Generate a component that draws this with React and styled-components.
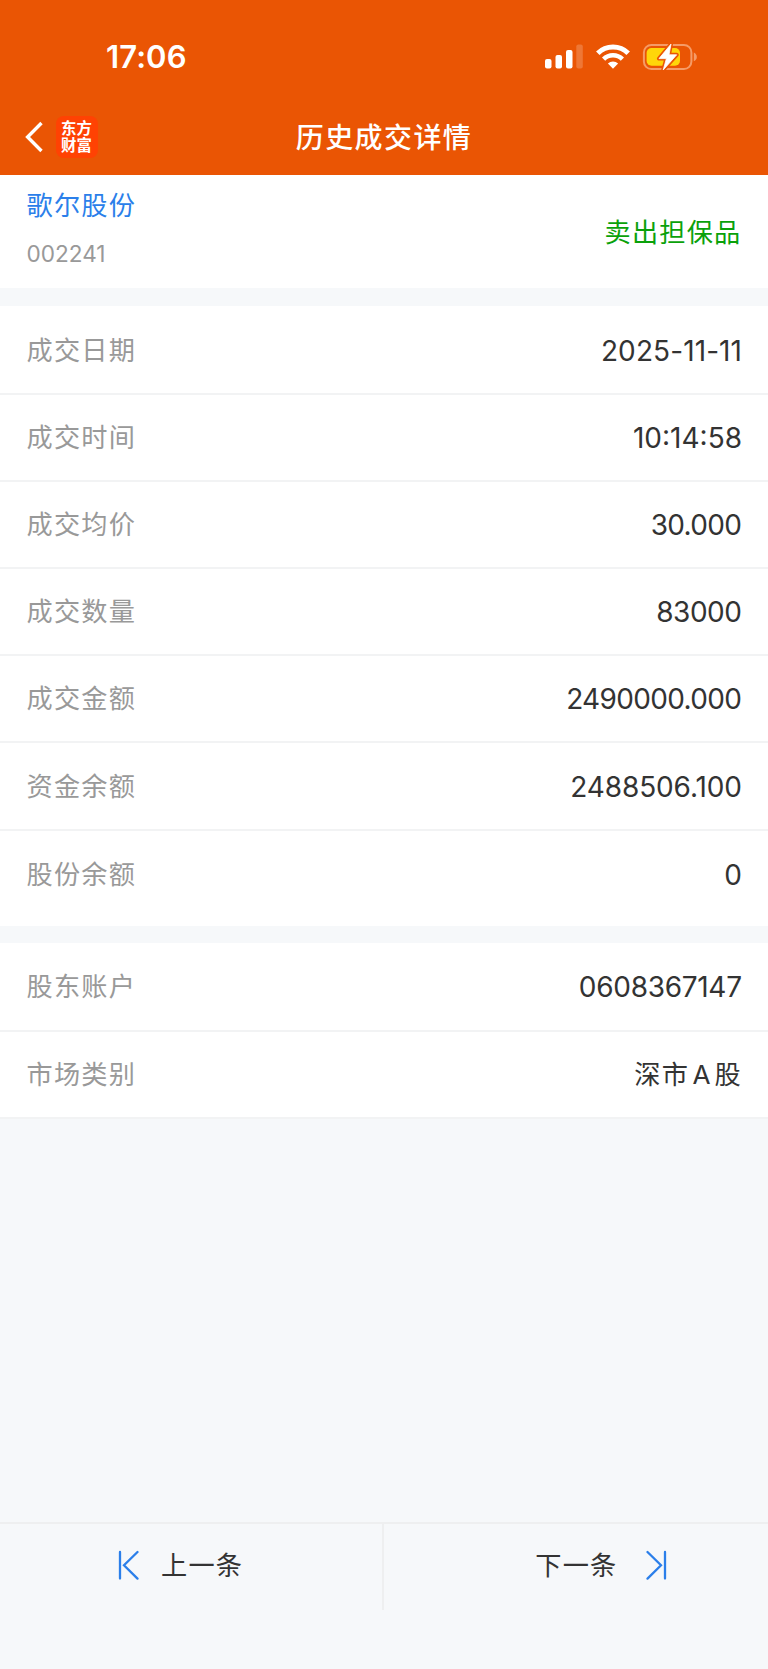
import React from 'react'
import styled, { createGlobalStyle } from 'styled-components'

const GlobalStyle = createGlobalStyle`
  * {
    box-sizing: border-box;
  }
  body {
    margin: 0;
    background: #f6f8fa;
    font-family: Inter, "Noto Sans CJK SC", sans-serif;
    color: #333;
  }
`;

const Page = styled.div`
  display: flex;
  flex-direction: column;
  width: 768px;
  height: 1669px;
  overflow: hidden;
  background: #f6f8fa;
`;

const Header = styled.header`
  height: 175px;
  background: #ea5504;
  color: #fff;
`;

const StatusBar = styled.div`
  display: flex;
  align-items: center;
  justify-content: space-between;
  height: 99px;
  padding: 15px 70px 0 106px;
`;

const Clock = styled.span`
  font-size: 31px;
  font-weight: 600;
  line-height: 40px;
  letter-spacing: 0.1px;
`;

const StatusIcons = styled.div`
  display: flex;
  align-items: center;
  gap: 12.5px;

  & svg {
    display: block;
  }
`;

const NavBar = styled.div`
  display: grid;
  grid-template-columns: 1fr auto 1fr;
  align-items: center;
  height: 76px;
`;

const NavLeft = styled.div`
  display: flex;
  align-items: center;
  gap: 13px;
  padding-left: 25px;
`;

const AppLogo = styled.div`
  display: flex;
  flex-direction: column;
  align-items: center;
  justify-content: center;
  width: 42px;
  height: 42px;
  padding-right: 1px;
  border-radius: 8px;
  background: #ff4203;
  font-size: 15.4px;
  font-weight: 700;
  line-height: 17px;
`;

const Title = styled.h1`
  margin: 0;
  padding-top: 2px;
  font-size: 28px;
  font-weight: 500;
  line-height: 40px;
  letter-spacing: 1.4px;
`;

const Stock = styled.section`
  display: flex;
  align-items: center;
  justify-content: space-between;
  height: 113px;
  padding: 3px 26.5px 0;
  background: #fff;
`;

const StockInfo = styled.div`
  display: flex;
  flex-direction: column;
  gap: 11px;
  padding-bottom: 7px;
`;

const StockName = styled.span`
  color: #2b7fea;
  font-size: 26.2px;
  line-height: 38px;
  letter-spacing: 1.2px;
`;

const StockCode = styled.span`
  color: #999;
  font-size: 22.6px;
  line-height: 36px;
`;

const Side = styled.span`
  color: #0aa10a;
  font-size: 26.2px;
  line-height: 38px;
  letter-spacing: 1.2px;
`;

const Group = styled.section`
  margin-top: ${(p) => p.$gap}px;
  padding-top: 1.5px;
  padding-bottom: ${(p) => p.$bottom || 0}px;
  background: #fff;
`;

const Row = styled.div`
  display: flex;
  align-items: center;
  justify-content: space-between;
  height: 87.2px;
  padding: 1px 26px 0 26.5px;
  border-bottom: ${(p) => (p.$last ? 0 : 2)}px solid #f2f3f4;
`;

const Label = styled.span`
  color: #999;
  font-size: 26.2px;
  line-height: 38px;
  letter-spacing: 1.2px;
`;

const Value = styled.span`
  font-size: 28px;
  line-height: 38px;
  letter-spacing: ${(p) => p.$tracking || 0}px;
  margin-right: ${(p) => -(p.$tracking || 0)}px;
`;

const Market = styled(Value)`
  margin-right: 0;
  font-size: 26.2px;
`;

const Latin = styled.span`
  margin: 0 2.8px 0 3.5px;
`;

const Footer = styled.footer`
  display: flex;
  height: 147px;
  margin-top: auto;
  border-top: 2px solid #eeeff0;
`;

const PagerButton = styled.button`
  display: flex;
  align-items: center;
  justify-content: ${(p) => (p.$next ? 'flex-end' : 'flex-start')};
  gap: ${(p) => (p.$next ? 28 : 22)}px;
  width: 384px;
  height: 86px;
  padding: ${(p) => (p.$next ? '0 101.5px 4px 0' : '0 0 4px 118px')};
  border: 0;
  border-right: ${(p) => (p.$next ? 0 : 2)}px solid #eeeff0;
  background: none;
  color: #333;
  font: inherit;
  font-size: 26.2px;
  line-height: 38px;
  letter-spacing: 1.2px;

  & span {
    margin-top: 2px;
  }
`;

const Signal = () => (
  <svg width="38" height="26" viewBox="0 0 38 26" fill="#fff">
    <rect x="0" y="15" width="6.5" height="9.5" rx="2" />
    <rect x="10.5" y="11" width="6.5" height="13.5" rx="2" />
    <rect x="21" y="6" width="6.5" height="18.5" rx="2" />
    <rect x="31.3" y="0.5" width="6.5" height="24" rx="2" opacity="0.2" />
  </svg>
)

const Wifi = () => (
  <svg width="34" height="26" viewBox="0 0 34 26" fill="none" stroke="#fff">
    <path d="M1.8 9.2A21.7 21.7 0 0 1 32.2 9.2" strokeWidth="5" />
    <path d="M7.6 15.1A13.4 13.4 0 0 1 26.4 15.1" strokeWidth="4.6" />
    <path d="M17 24.7L11.9 19.5A7.3 7.3 0 0 1 22.1 19.5Z" fill="#fff" stroke="none" />
  </svg>
)

const Battery = () => (
  <svg width="56" height="28" viewBox="0 0 56 28">
    <rect x="1.9" y="1.9" width="47.5" height="24.2" rx="7.5" fill="none" stroke="#f59b67" strokeWidth="2" />
    <path d="M51.8 9.5Q54.8 11 54.8 14T51.8 18.3Z" fill="#f59b67" />
    <rect x="4.6" y="5" width="33.4" height="17.8" rx="5" fill="#ffd60a" />
    <path
      d="M29 1.1L17 15.6H24.4L21.2 27L34.7 11.8H27Z"
      fill="none"
      stroke="#ea5504"
      strokeWidth="4"
      strokeLinejoin="round"
    />
    <path
      d="M29 1.1L17 15.6H24.4L21.2 27L34.7 11.8H27Z"
      fill="#fff"
      stroke="#fff"
      strokeWidth="0.8"
      strokeLinejoin="round"
    />
  </svg>
)

const Back = () => (
  <svg width="18" height="32" viewBox="0 0 18 32" fill="none" stroke="#fff" strokeWidth="3.4">
    <path d="M16.5 2L2.6 16L16.5 30" />
  </svg>
)

const PagerIcon = ({ next }) => (
  <svg width="21" height="30" viewBox="0 0 21 30" fill="none" stroke="#2b7fea" strokeWidth="2.3" strokeLinecap="round">
    {next ? (
      <path d="M1.5 2L15 15.3L1.5 28.6M19 2V28.6" />
    ) : (
      <path d="M19.5 2L6 15.3L19.5 28.6M2 2V28.6" />
    )}
  </svg>
)

const trade = [
  { label: '成交日期', value: '2025-11-11', tracking: 0.1 },
  { label: '成交时间', value: '10:14:58', tracking: 0 },
  { label: '成交均价', value: '30.000', tracking: -0.65 },
  { label: '成交数量', value: '83000', tracking: -0.45 },
  { label: '成交金额', value: '2490000.000', tracking: -0.65 },
  { label: '资金余额', value: '2488506.100', tracking: -0.1 },
  { label: '股份余额', value: '0', tracking: 0 },
]

const App = () => {
  return (
    <Page>
      <GlobalStyle />
      <Header>
        <StatusBar>
          <Clock>17:06</Clock>
          <StatusIcons>
            <Signal />
            <Wifi />
            <Battery />
          </StatusIcons>
        </StatusBar>
        <NavBar>
          <NavLeft>
            <Back />
            <AppLogo>
              <span>东方</span>
              <span>财富</span>
            </AppLogo>
          </NavLeft>
          <Title>历史成交详情</Title>
        </NavBar>
      </Header>
      <Stock>
        <StockInfo>
          <StockName>歌尔股份</StockName>
          <StockCode>002241</StockCode>
        </StockInfo>
        <Side>卖出担保品</Side>
      </Stock>
      <Group $gap={18} $bottom={8}>
        {trade.map(({ label, value, tracking }, i) => (
          <Row key={label} $last={i === trade.length - 1}>
            <Label>{label}</Label>
            <Value $tracking={tracking}>{value}</Value>
          </Row>
        ))}
      </Group>
      <Group $gap={17}>
        <Row>
          <Label>股东账户</Label>
          <Value $tracking={-0.3}>0608367147</Value>
        </Row>
        <Row>
          <Label>市场类别</Label>
          <Market $tracking={1.2}>深市<Latin>A</Latin>股</Market>
        </Row>
      </Group>
      <Footer>
        <PagerButton>
          <PagerIcon />
          <span>上一条</span>
        </PagerButton>
        <PagerButton $next>
          <span>下一条</span>
          <PagerIcon next />
        </PagerButton>
      </Footer>
    </Page>
  )
}

export default App
